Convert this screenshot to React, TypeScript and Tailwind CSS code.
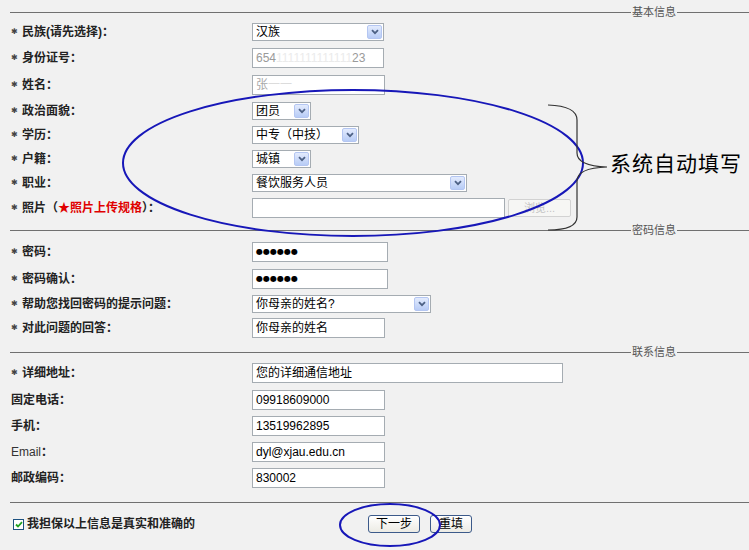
import React from 'react';

// little XP style dropdown arrow
function Arrow() {
    return (
        <div className="w-[15px] h-[14px] shrink-0 rounded-[2px] border border-[#b4c6f2] bg-gradient-to-b from-[#e3ebfd] to-[#b8ccf6] flex items-center justify-center">
            <svg width="8" height="6" viewBox="0 0 8 6">
                <path d="M1 1.2 L4 4.2 L7 1.2" fill="none" stroke="#4d6185" strokeWidth="1.8" />
            </svg>
        </div>
    );
}

function Select({ w, value }: { w: string; value: string }) {
    return (
        <div className={`${w} h-[18px] bg-white border border-[#a5acb2] flex items-center justify-between pl-[3px] pr-[1px]`}>
            <span className="text-[12px] leading-none text-black whitespace-nowrap">{value}</span>
            <Arrow />
        </div>
    );
}

function Box({ w, children }: { w: string; children?: React.ReactNode }) {
    return (
        <div className={`${w} h-[20px] bg-white border border-[#a5acb2] flex items-center pl-[3px] text-[12px] leading-none text-black whitespace-nowrap`}>
            {children}
        </div>
    );
}

function Head({ title, className = '' }: { title?: string; className?: string }) {
    return (
        <div className={`flex items-center h-[14px] pl-[10px] ${className}`}>
            <div className="flex-1 h-px bg-[#707070]" />
            {title && (
                <>
                    <span className="px-[1px] text-[11px] leading-none text-[#555]">{title}</span>
                    <div className="w-[72px] h-px bg-[#707070]" />
                </>
            )}
        </div>
    );
}

function Row({ h, label, star = true, children }: { h: string; label: React.ReactNode; star?: boolean; children?: React.ReactNode }) {
    return (
        <div className={`flex items-center ${h}`}>
            <div className={`w-[252px] shrink-0 flex items-center text-[12px] font-bold leading-none text-[#222] ${star ? 'pl-[11px]' : 'pl-[11px]'}`}>
                {star && <span className="w-[11px] text-[8px] text-[#444] font-['DejaVu_Sans',sans-serif]">✱</span>}
                <span className="whitespace-nowrap">{label}</span>
            </div>
            <div className="flex items-center">{children}</div>
        </div>
    );
}

const Dots = () => (
    <span className="text-[8px] font-['DejaVu_Sans',sans-serif]">●●●●●●</span>
);

export default function App() {
    return (
        <div className="relative w-[749px] h-[550px] overflow-hidden bg-[#f1f1f1] font-['Liberation_Sans','Noto_Sans_CJK_SC',sans-serif]">
            <Head title="基本信息" className="mt-[5px]" />
            <Row h="h-[26px]" label="民族(请先选择)：">
                <Select w="w-[132px]" value="汉族" />
            </Row>
            <Row h="h-[26px]" label="身份证号：">
                <Box w="w-[132px]">
                    <span className="text-[#9a9a9a]">654</span>
                    <span className="text-[#ebebeb]">1111111111111</span>
                    <span className="text-[#9a9a9a]">23</span>
                </Box>
            </Row>
            <Row h="h-[27px]" label="姓名：">
                <Box w="w-[133px]">
                    <span className="text-[#a8a8a8]">张</span>
                    <span className="text-[#dcdcdc]">一一</span>
                </Box>
            </Row>
            <Row h="h-[25px]" label="政治面貌：">
                <Select w="w-[59px]" value="团员" />
            </Row>
            <Row h="h-[24px]" label="学历：">
                <Select w="w-[107px]" value="中专（中技）" />
            </Row>
            <Row h="h-[24px]" label="户籍：">
                <Select w="w-[59px]" value="城镇" />
            </Row>
            <Row h="h-[24px]" label="职业：">
                <Select w="w-[215px]" value="餐饮服务人员" />
            </Row>
            <Row
                h="h-[26px]"
                label={
                    <>
                        照片（<span className="text-[#e00000]">★照片上传规格</span>）：
                    </>
                }
            >
                <Box w="w-[253px]" />
                <div className="ml-[3px] w-[63px] h-[18px] rounded-[2px] border border-[#d2d2d2] bg-[#f6f6f4] flex items-center justify-center text-[11px] leading-none text-[#c4c4c4]">
                    浏览...
                </div>
            </Row>

            <Head title="密码信息" className="mt-[2px]" />
            <Row h="h-[29px]" label="密码：">
                <Box w="w-[136px]"><Dots /></Box>
            </Row>
            <Row h="h-[25px]" label="密码确认：">
                <Box w="w-[136px]"><Dots /></Box>
            </Row>
            <Row h="h-[25px]" label="帮助您找回密码的提示问题：">
                <Select w="w-[179px]" value="你母亲的姓名?" />
            </Row>
            <Row h="h-[24px]" label="对此问题的回答：">
                <Box w="w-[133px]">你母亲的姓名</Box>
            </Row>

            <Head title="联系信息" className="mt-[5px]" />
            <Row h="h-[28px]" label="详细地址：">
                <Box w="w-[311px]">您的详细通信地址</Box>
            </Row>
            <Row h="h-[26px]" star={false} label="固定电话：">
                <Box w="w-[133px]">09918609000</Box>
            </Row>
            <Row h="h-[26px]" star={false} label="手机：">
                <Box w="w-[133px]">13519962895</Box>
            </Row>
            <Row h="h-[26px]" star={false} label={<><span className="font-normal text-[#333]">Email</span>：</>}>
                <Box w="w-[133px]">dyl@xjau.edu.cn</Box>
            </Row>
            <Row h="h-[26px]" star={false} label="邮政编码：">
                <Box w="w-[133px]">830002</Box>
            </Row>

            <Head className="mt-[4px]" />
            <div className="flex items-center h-[30px]">
                <div className="w-[368px] shrink-0 pl-[13px] flex items-center">
                    <div className="w-[11px] h-[11px] border border-[#1c5180] bg-white flex items-center justify-center">
                        <svg width="8" height="7" viewBox="0 0 8 7">
                            <path d="M1 3.5 L3 5.5 L7 1.2" fill="none" stroke="#21a121" strokeWidth="1.8" />
                        </svg>
                    </div>
                    <span className="ml-[3px] text-[12px] font-bold leading-none text-[#222]">我担保以上信息是真实和准确的</span>
                </div>
                <button className="w-[52px] h-[18px] rounded-[3px] border border-[#3c5a8a] bg-gradient-to-b from-white to-[#ecebe4] text-[12px] leading-none text-black">
                    下一步
                </button>
                <button className="ml-[10px] w-[42px] h-[18px] rounded-[3px] border border-[#3c5a8a] bg-gradient-to-b from-white to-[#ecebe4] text-[12px] leading-none text-black">
                    重填
                </button>
            </div>

            {/* hand drawn annotations on top */}
            <svg className="absolute inset-0 pointer-events-none" width="749" height="550" viewBox="0 0 749 550">
                <ellipse cx="353" cy="163" rx="230" ry="73" fill="none" stroke="#1717b8" strokeWidth="2" />
                <path
                    d="M548 105 Q577 106 577 120 L577 153 Q577 166 607 167 Q577 168 577 181 L577 217 Q577 230 548 230"
                    fill="none"
                    stroke="#333"
                    strokeWidth="1.2"
                />
                <ellipse cx="390" cy="525" rx="50" ry="21" fill="none" stroke="#1717b8" strokeWidth="2" />
            </svg>
            <div className="absolute left-[610px] top-[150px] text-[21px] tracking-[1px] leading-[24px] text-black font-['Noto_Sans_CJK_SC',sans-serif] whitespace-nowrap">
                系统自动填写
            </div>
        </div>
    );
}
